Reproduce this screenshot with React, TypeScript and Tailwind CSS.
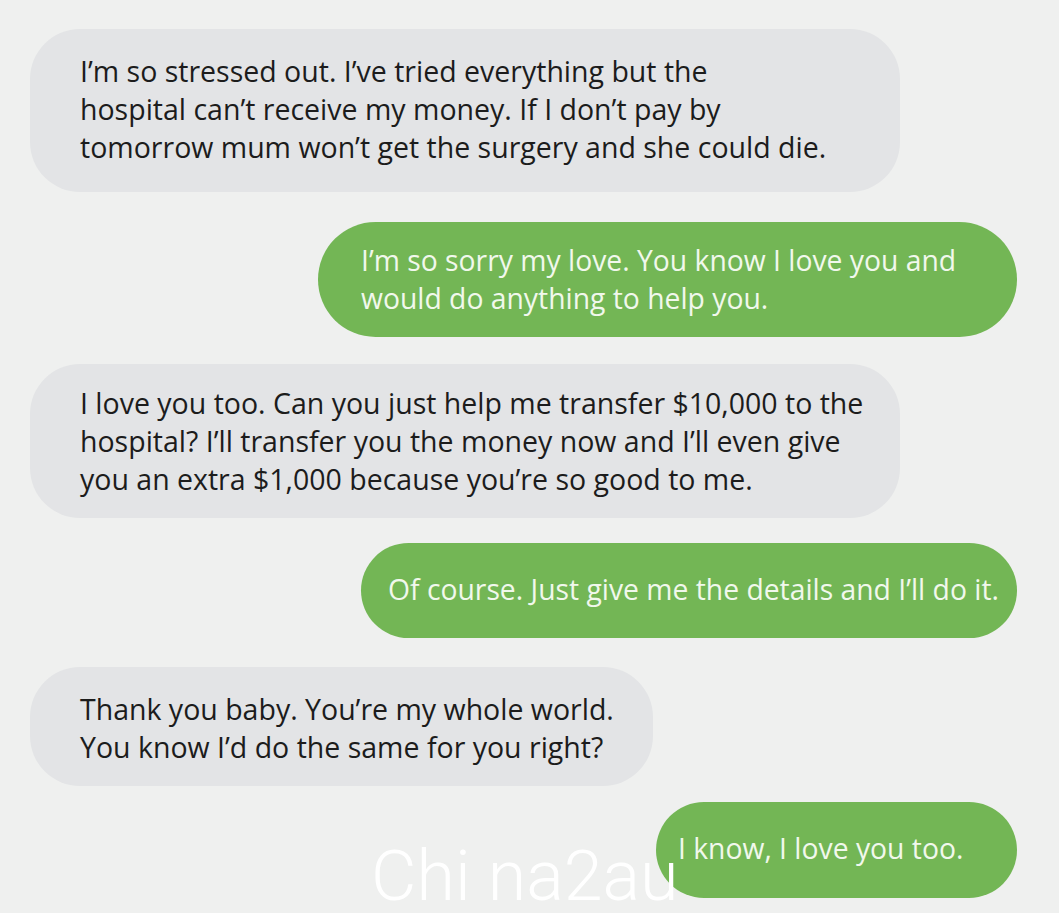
import React from "react";

const font = { fontFamily: '"Open Sans", "Liberation Sans", sans-serif' };

function Gray({ lines, className }: { lines: string[]; className: string }) {
  return (
    <div className={`self-start bg-[#e3e4e6] text-[#1c1c1c] rounded-[50px] ${className}`}>
      {lines.map((l, i) => (
        <div key={i} className="whitespace-nowrap leading-[38px] text-[28.5px]">
          {l}
        </div>
      ))}
    </div>
  );
}

function Green({ lines, className }: { lines: string[]; className: string }) {
  return (
    <div className={`self-end bg-[#73b655] text-[#f1f8ec] rounded-full ${className}`}>
      {lines.map((l, i) => (
        <div key={i} className="whitespace-nowrap leading-[38px] text-[28.3px]">
          {l}
        </div>
      ))}
    </div>
  );
}

export default function App() {
  return (
    <div
      className="relative w-[1059px] h-[913px] overflow-hidden bg-[#eff0ef] flex flex-col pl-[30px] pr-[42px] pt-[29px]"
      style={font}
    >
      <Gray
        className="w-[870px] h-[163px] pl-[50px] pt-[23px]"
        lines={[
          "I’m so stressed out. I’ve tried everything but the",
          "hospital can’t receive my money. If I don’t pay by",
          "tomorrow mum won’t get the surgery and she could die.",
        ]}
      />
      <Green
        className="mt-[30px] w-[699px] h-[115px] pl-[43px] pt-[19px]"
        lines={["I’m so sorry my love. You know I love you and", "would do anything to help you."]}
      />
      <Gray
        className="mt-[27px] w-[870px] h-[154px] pl-[50px] pt-[20px]"
        lines={[
          "I love you too. Can you just help me transfer $10,000 to the",
          "hospital? I’ll transfer you the money now and I’ll even give",
          "you an extra $1,000 because you’re so good to me.",
        ]}
      />
      <Green
        className="mt-[25px] w-[656px] h-[95px] pl-[27px] pt-[27px]"
        lines={["Of course. Just give me the details and I’ll do it."]}
      />
      <Gray
        className="mt-[29px] w-[623px] h-[119px] pl-[50px] pt-[23px]"
        lines={["Thank you baby. You’re my whole world.", "You know I’d do the same for you right?"]}
      />
      <Green
        className="mt-[16px] w-[361px] h-[96px] pl-[22px] pt-[27px]"
        lines={["I know, I love you too."]}
      />
      <div
        className="absolute left-[371px] top-[841px] h-[70px] text-white text-[70px] leading-[70px] font-light whitespace-nowrap"
        style={{ fontFamily: 'Roboto, "Liberation Sans", sans-serif' }}
      >
        Chi na2au
      </div>
    </div>
  );
}
